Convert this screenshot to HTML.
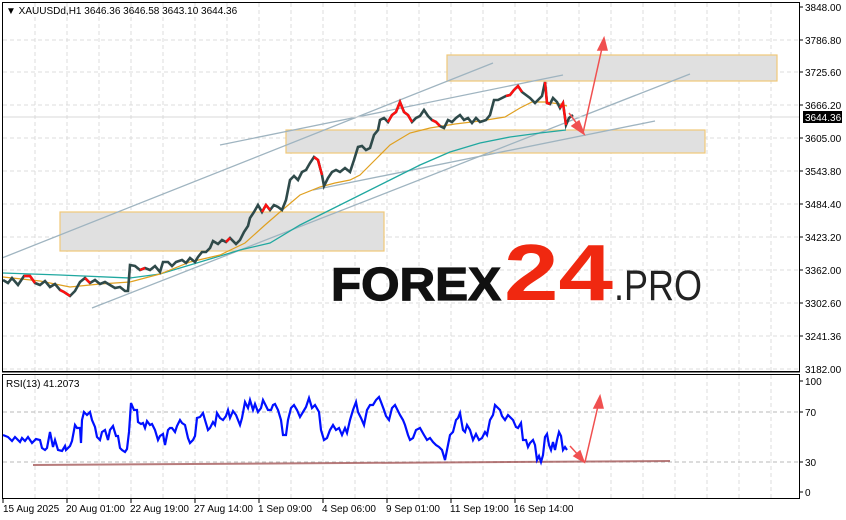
<!DOCTYPE html>
<html><head><meta charset="utf-8"><style>
html,body{margin:0;padding:0;background:#fff;}
svg{display:block;font-family:"Liberation Sans","DejaVu Sans",sans-serif;}
</style></head><body>
<svg width="846" height="520" viewBox="0 0 846 520" xmlns="http://www.w3.org/2000/svg">
<rect width="846" height="520" fill="#fff"/>
<g stroke="#dcdcdc" stroke-width="1" stroke-dasharray="4,3">
<line x1="3" y1="40" x2="800" y2="40"/><line x1="3" y1="72" x2="800" y2="72"/><line x1="3" y1="105" x2="800" y2="105"/><line x1="3" y1="138" x2="800" y2="138"/><line x1="3" y1="171" x2="800" y2="171"/><line x1="3" y1="204" x2="800" y2="204"/><line x1="3" y1="237" x2="800" y2="237"/><line x1="3" y1="270" x2="800" y2="270"/><line x1="3" y1="303" x2="800" y2="303"/><line x1="3" y1="336" x2="800" y2="336"/><line x1="3" y1="369" x2="800" y2="369"/>
<line x1="35" y1="3" x2="35" y2="371"/><line x1="67" y1="3" x2="67" y2="371"/><line x1="99" y1="3" x2="99" y2="371"/><line x1="131" y1="3" x2="131" y2="371"/><line x1="163" y1="3" x2="163" y2="371"/><line x1="195" y1="3" x2="195" y2="371"/><line x1="227" y1="3" x2="227" y2="371"/><line x1="259" y1="3" x2="259" y2="371"/><line x1="291" y1="3" x2="291" y2="371"/><line x1="323" y1="3" x2="323" y2="371"/><line x1="355" y1="3" x2="355" y2="371"/><line x1="387" y1="3" x2="387" y2="371"/><line x1="419" y1="3" x2="419" y2="371"/><line x1="451" y1="3" x2="451" y2="371"/><line x1="483" y1="3" x2="483" y2="371"/><line x1="515" y1="3" x2="515" y2="371"/><line x1="547" y1="3" x2="547" y2="371"/><line x1="579" y1="3" x2="579" y2="371"/><line x1="611" y1="3" x2="611" y2="371"/><line x1="643" y1="3" x2="643" y2="371"/><line x1="675" y1="3" x2="675" y2="371"/><line x1="707" y1="3" x2="707" y2="371"/><line x1="739" y1="3" x2="739" y2="371"/><line x1="771" y1="3" x2="771" y2="371"/>
</g>
<g fill="#e0e0e0" stroke="#f0c878" stroke-width="1.2">
<rect x="60" y="212" width="324" height="39"/>
<rect x="286" y="130" width="419" height="23"/>
<rect x="447" y="55" width="330" height="26"/>
</g>
<text x="331" y="300" font-size="46" font-weight="bold" fill="#111" stroke="#111" stroke-width="1.2" textLength="170" lengthAdjust="spacingAndGlyphs">FOREX</text>
<text x="504" y="300" font-size="80" font-weight="bold" fill="#f02810" textLength="109" lengthAdjust="spacingAndGlyphs">24</text>
<text x="614" y="300" font-size="43" fill="#222" textLength="88" lengthAdjust="spacingAndGlyphs">.PRO</text>
<g stroke="#9fb4c0" stroke-width="1.3" fill="none">
<line x1="2" y1="258" x2="493" y2="63"/>
<line x1="220" y1="145" x2="563" y2="75"/>
<line x1="92" y1="308" x2="690" y2="74"/>
<line x1="313" y1="190" x2="655" y2="121"/>
</g>
<line x1="3" y1="117" x2="800" y2="117" stroke="#d8d8d8"/>
<polyline fill="none" stroke="#20a8a0" stroke-width="1.3" points="3,273 60,275 130,278 160,274 200,262 240,250 270,243 300,225 330,210 360,195 390,180 420,165 450,152 480,143 510,137 540,133 566,130"/>
<polyline fill="none" stroke="#e0a020" stroke-width="1.2" points="3,277 40,281 70,287 100,284 130,282 160,274 190,262 220,255 245,243 265,225 280,212 300,195 320,187 335,183 350,180 360,175 375,160 390,145 410,133 430,128 455,124 480,121 505,117 520,108 532,102 545,102 560,104 567,106"/>
<polyline fill="none" stroke="#2f4a4a" stroke-width="2.6" points="3,280 8,283 12,278 18,285 24,276 30,276 35,283 40,285 45,281 50,287 55,284 60,290 64,292 70,296 75,291 80,282 85,278 90,283 95,280 100,284 105,282 110,285 115,288 120,287 125,291 128,291 130,265 135,266 140,270 145,268 150,270 155,266 160,272 163,262 168,262 172,266 176,262 182,260 186,263 190,258 195,262 198,257 202,252 206,252 210,248 213,241 218,244 222,240 226,242 230,238 236,244 240,240 244,232 248,226 250,218 254,212 258,205 262,212 266,205 270,210 274,205 278,207 282,210 286,200 290,180 294,176 298,180 302,172 306,170 310,163 314,157 318,160 322,175 324,186 328,178 332,172 336,170 340,172 345,168 350,172 354,160 358,147 362,146 366,150 370,148 374,135 378,130 380,120 384,118 388,122 392,115 396,112 400,102 404,112 408,115 412,122 416,118 420,116 424,110 428,116 432,120 436,122 440,126 444,128 448,120 452,122 456,118 460,115 464,120 468,118 472,123 476,118 480,122 486,120 490,115 494,100 498,100 502,98 506,96 510,95 514,90 518,86 522,92 526,95 530,98 535,103 538,100 542,96 545,82 547,103 550,104 553,98 557,102 560,108 563,103 566,125 569,118 573,115"/>
<g stroke="#ff1010" stroke-width="2.4" fill="none">
<polyline points="24,276 30,276 35,283"/><polyline points="60,290 64,292 70,296"/><polyline points="85,278 90,283"/><polyline points="140,270 145,268"/><polyline points="226,242 230,238"/><polyline points="262,212 266,205 270,210"/><polyline points="314,157 318,160 322,175"/><polyline points="388,122 392,115 396,112 400,102 404,112 408,115 412,122"/><polyline points="432,120 436,122 440,126"/><polyline points="506,96 510,95 514,90 518,86 522,92"/><polyline points="545,82 547,103 550,104"/><polyline points="560,108 563,103 566,125"/>
</g>
<g stroke="#f05050" stroke-width="1.5" fill="#f05050">
<line x1="569" y1="113" x2="580" y2="128"/>
<polygon points="584,134 572,126 579,121"/>
<line x1="583" y1="133" x2="602" y2="48"/>
<polygon points="604,38 598,50 607,50"/>
</g>
<rect x="2.5" y="2.5" width="797" height="369" fill="none" stroke="#000" stroke-width="1"/>
<g font-size="10" fill="#000">
<text x="805" y="11">3848.00</text><text x="805" y="44">3786.80</text><text x="805" y="76">3725.60</text><text x="805" y="109">3666.20</text><text x="805" y="142">3605.00</text><text x="805" y="175">3543.80</text><text x="805" y="208">3484.40</text><text x="805" y="241">3423.20</text><text x="805" y="274">3362.00</text><text x="805" y="307">3302.60</text><text x="805" y="340">3241.36</text><text x="805" y="373">3182.00</text>
</g>
<g stroke="#000"><line x1="800" y1="7" x2="803" y2="7"/><line x1="800" y1="40" x2="803" y2="40"/><line x1="800" y1="72" x2="803" y2="72"/><line x1="800" y1="105" x2="803" y2="105"/><line x1="800" y1="138" x2="803" y2="138"/><line x1="800" y1="171" x2="803" y2="171"/><line x1="800" y1="204" x2="803" y2="204"/><line x1="800" y1="237" x2="803" y2="237"/><line x1="800" y1="270" x2="803" y2="270"/><line x1="800" y1="303" x2="803" y2="303"/><line x1="800" y1="336" x2="803" y2="336"/></g>
<rect x="803" y="111" width="39" height="12" fill="#000"/>
<text x="805" y="121" font-size="10" fill="#fff">3644.36</text>
<text x="6" y="14" font-size="10" fill="#000">▼ XAUUSDd,H1  3646.36 3646.58 3643.10 3644.36</text>
<g stroke="#dcdcdc" stroke-dasharray="4,3">
<line x1="35" y1="375" x2="35" y2="498"/><line x1="67" y1="375" x2="67" y2="498"/><line x1="99" y1="375" x2="99" y2="498"/><line x1="131" y1="375" x2="131" y2="498"/><line x1="163" y1="375" x2="163" y2="498"/><line x1="195" y1="375" x2="195" y2="498"/><line x1="227" y1="375" x2="227" y2="498"/><line x1="259" y1="375" x2="259" y2="498"/><line x1="291" y1="375" x2="291" y2="498"/><line x1="323" y1="375" x2="323" y2="498"/><line x1="355" y1="375" x2="355" y2="498"/><line x1="387" y1="375" x2="387" y2="498"/><line x1="419" y1="375" x2="419" y2="498"/><line x1="451" y1="375" x2="451" y2="498"/><line x1="483" y1="375" x2="483" y2="498"/><line x1="515" y1="375" x2="515" y2="498"/><line x1="547" y1="375" x2="547" y2="498"/><line x1="579" y1="375" x2="579" y2="498"/><line x1="611" y1="375" x2="611" y2="498"/><line x1="643" y1="375" x2="643" y2="498"/><line x1="675" y1="375" x2="675" y2="498"/><line x1="707" y1="375" x2="707" y2="498"/><line x1="739" y1="375" x2="739" y2="498"/><line x1="771" y1="375" x2="771" y2="498"/>
</g>
<g stroke="#b8b8b8" stroke-dasharray="4,3"><line x1="3" y1="412" x2="800" y2="412"/><line x1="3" y1="462" x2="800" y2="462"/></g>
<line x1="33" y1="465" x2="670" y2="461" stroke="#a05050" stroke-width="2" opacity="0.75"/>
<polyline fill="none" stroke="#0010ff" stroke-width="2.2" points="3,435 8,437 12,441 15,437 20,442 22,438 25,441 28,437 30,440 32,443 36,439 40,440 42,448 45,450 47,448 50,432 53,447 55,440 58,450 62,451 65,446 66,450 70,446 72,441 75,425 77,428 80,428 81,443 82,420 84,412 87,415 90,412 92,420 95,427 97,437 100,440 102,432 105,430 108,440 110,430 113,426 116,436 118,436 120,448 122,450 125,452 127,449 129,432 131,403 134,410 137,410 138,422 141,424 143,423 145,428 147,421 150,425 152,424 155,430 158,440 160,436 163,434 165,445 168,430 170,428 172,428 175,432 177,426 180,420 182,423 185,425 188,438 190,443 193,440 195,436 197,418 200,417 203,413 205,420 208,430 210,428 213,422 215,425 217,413 220,418 223,420 226,416 228,410 230,418 233,411 236,415 238,420 240,425 242,418 245,402 248,408 250,400 253,410 255,404 258,412 261,408 263,400 265,404 268,410 271,410 273,405 275,404 278,410 281,420 283,435 286,435 288,420 291,408 294,405 297,410 300,417 303,412 306,407 309,398 312,408 315,405 319,412 321,430 324,440 327,438 330,430 333,425 336,430 339,428 342,435 345,428 347,433 350,420 353,410 356,402 358,412 361,418 364,425 367,410 370,405 373,405 376,400 379,397 381,402 384,410 386,416 389,420 392,408 395,405 400,415 403,420 405,425 408,435 410,440 413,438 416,430 420,428 424,435 427,440 430,438 433,442 436,445 439,447 442,450 445,460 448,445 450,435 453,432 456,420 458,418 460,413 463,430 465,432 467,425 470,430 473,440 476,434 479,440 482,438 485,432 487,435 490,420 493,415 495,405 497,407 500,410 502,416 505,420 508,415 511,418 513,420 516,427 518,428 521,423 523,440 526,440 528,447 530,443 533,440 535,445 537,460 539,456 541,462 543,455 545,437 547,434 549,445 551,450 553,442 555,450 557,440 559,432 561,436 563,450 565,447 567,450"/>
<g stroke="#f05050" stroke-width="1.5" fill="#f05050">
<line x1="570" y1="446" x2="580" y2="457"/>
<polygon points="584,462 574,456 580,451"/>
<line x1="585" y1="462" x2="598" y2="406"/>
<polygon points="600,396 594,408 603,408"/>
</g>
<rect x="2.5" y="374.5" width="797" height="124" fill="none" stroke="#000"/>
<line x1="2" y1="372" x2="800" y2="372" stroke="#000"/>
<text x="6" y="387" font-size="10" fill="#000">RSI(13) 41.2073</text>
<g font-size="10" fill="#000"><text x="805" y="385">100</text><text x="805" y="416">70</text><text x="805" y="466">30</text><text x="805" y="496">0</text></g>
<g stroke="#000"><line x1="800" y1="381" x2="803" y2="381"/><line x1="800" y1="412" x2="803" y2="412"/><line x1="800" y1="462" x2="803" y2="462"/><line x1="800" y1="492" x2="803" y2="492"/></g>
<g stroke="#000"><line x1="3" y1="499" x2="3" y2="503"/><line x1="67" y1="499" x2="67" y2="503"/><line x1="131" y1="499" x2="131" y2="503"/><line x1="195" y1="499" x2="195" y2="503"/><line x1="259" y1="499" x2="259" y2="503"/><line x1="323" y1="499" x2="323" y2="503"/><line x1="387" y1="499" x2="387" y2="503"/><line x1="451" y1="499" x2="451" y2="503"/><line x1="515" y1="499" x2="515" y2="503"/></g>
<g font-size="10" fill="#000">
<text x="3" y="512">15 Aug 2025</text><text x="66" y="512">20 Aug 01:00</text><text x="130" y="512">22 Aug 19:00</text><text x="194" y="512">27 Aug 14:00</text><text x="258" y="512">1 Sep 09:00</text><text x="322" y="512">4 Sep 06:00</text><text x="386" y="512">9 Sep 01:00</text><text x="450" y="512">11 Sep 19:00</text><text x="514" y="512">16 Sep 14:00</text>
</g>
</svg>
</body></html>
